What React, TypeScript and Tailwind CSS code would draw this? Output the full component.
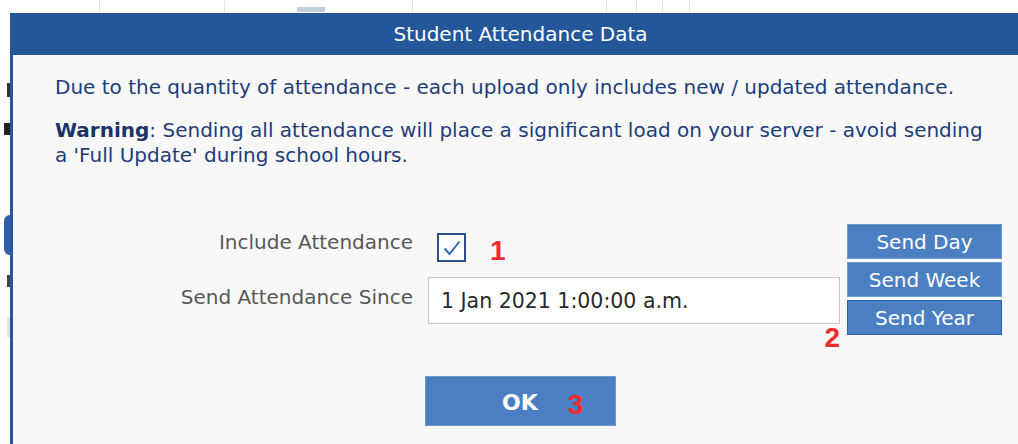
import React, { useState } from "react";

const font = { fontFamily: '"DejaVu Sans", Verdana, sans-serif' };
const markerFont = { fontFamily: '"Liberation Sans", Arial, sans-serif' };

const SideButton: React.FC<{ label: string; active?: boolean }> = ({ label, active }) => (
  <button
    type="button"
    className={`h-[35px] w-[155px] bg-[#4a7fc2] text-[20px] leading-none text-white border ${
      active ? "border-[#2a5fb8]" : "border-[#6f9ad0]"
    }`}
    style={font}
  >
    {label}
  </button>
);

// red step numbers
const Marker: React.FC<{ n: number; className?: string }> = ({ n, className }) => (
  <span className={`font-bold text-[28px] leading-none text-[#ee2a2f] ${className ?? ""}`} style={markerFont}>
    {n}
  </span>
);

export default function App() {
  const [include, setInclude] = useState(true);
  const [since, setSince] = useState("1 Jan 2021 1:00:00 a.m.");

  return (
    <div className="w-[1018px] h-[444px] overflow-hidden bg-white flex flex-col" style={font}>
      {/* page behind the dialog */}
      <div className="h-[13px] flex shrink-0">
        <div className="w-[100px] border-r border-[#e6e6e6]" />
        <div className="w-[125px] border-r border-[#e6e6e6]" />
        <div className="w-[72px]" />
        <div className="w-[28px] mt-[7px] h-[5px] bg-[#c4cedd]" />
        <div className="w-[88px] border-r border-[#e6e6e6]" />
        <div className="w-[194px] border-r border-[#e6e6e6]" />
        <div className="w-[30px] border-r border-[#e6e6e6]" />
        <div className="w-[26px] border-r border-[#e6e6e6]" />
        <div className="w-[27px] border-r border-[#e6e6e6]" />
      </div>

      <div className="flex flex-1">
        <div className="w-[10px] shrink-0 flex flex-col items-end">
          <div className="h-[70px]" />
          <div className="w-[3px] h-[14px] bg-[#333]" />
          <div className="h-[26px]" />
          <div className="w-[6px] h-[12px] bg-[#222]" />
          <div className="h-[80px]" />
          <div className="w-[6px] h-[40px] rounded-l-full bg-[#2d5ea8]" />
          <div className="h-[20px]" />
          <div className="w-[3px] h-[12px] bg-[#444]" />
          <div className="h-[30px]" />
          <div className="w-[3px] h-[20px] bg-[#e2e2e2]" />
        </div>

        {/* dialog */}
        <div className="w-[1018px] shrink-0 flex flex-col border-l-[3px] border-[#2a53a0] bg-[#f8f8f8]">
          <div className="h-[42px] bg-[#24579a] flex items-center justify-center text-white text-[20px]">
            Student Attendance Data
          </div>

          <div className="pl-[42px] pt-[20px] text-[20px] leading-[25px] text-[#1e3d7a]">
            <p>Due to the quantity of attendance - each upload only includes new / updated attendance.</p>
            <p className="mt-[18px]">
              <span className="font-bold text-[#1b3368]">Warning</span>: Sending all attendance will place a
              significant load on your server - avoid sending
              <br />a 'Full Update' during school hours.
            </p>
          </div>

          <div className="flex mt-[56px]">
            <div className="flex flex-col">
              <div className="flex items-start h-[53px]">
                <label className="w-[400px] pt-[6px] text-right text-[20px] leading-[25px] text-[#585858]">
                  Include Attendance
                </label>
                <button
                  type="button"
                  onClick={() => setInclude((v) => !v)}
                  className="ml-[24px] mt-[9px] w-[29px] h-[29px] border-2 border-[#2b4f86] bg-white flex items-center justify-center"
                >
                  {include && (
                    <svg width="20" height="18" viewBox="0 0 20 18" fill="none">
                      <path d="M2.5 9.5 L7.5 15 L17.5 2.5" stroke="#2f67b8" strokeWidth="2" />
                    </svg>
                  )}
                </button>
                <Marker n={1} className="ml-[24px] mt-[13px]" />
              </div>
              <div className="flex items-center">
                <label className="w-[400px] pb-[6px] text-right text-[20px] leading-[25px] text-[#585858]">
                  Send Attendance Since
                </label>
                <input
                  value={since}
                  onChange={(e) => setSince(e.target.value)}
                  className="ml-[15px] w-[412px] h-[47px] px-[12px] bg-white border border-[#c8c8c8] text-[20.5px] text-[#2a2a2a] outline-none"
                  style={font}
                />
              </div>
              <div className="flex justify-end">
                <Marker n={2} />
              </div>
            </div>

            <div className="flex flex-col gap-[3px] ml-[7px]">
              <SideButton label="Send Day" />
              <SideButton label="Send Week" />
              <SideButton label="Send Year" active />
            </div>
          </div>

          <div className="flex justify-center mt-[24px]">
            <button
              type="button"
              className="w-[191px] h-[50px] pl-[76px] bg-[#4a7fc2] border border-[#6f9ad0] flex items-center text-white"
            >
              <span className="font-bold text-[22px] leading-none mt-[4px]">OK</span>
              <Marker n={3} className="ml-[30px] mt-[7px]" />
            </button>
          </div>
        </div>
      </div>
    </div>
  );
}
